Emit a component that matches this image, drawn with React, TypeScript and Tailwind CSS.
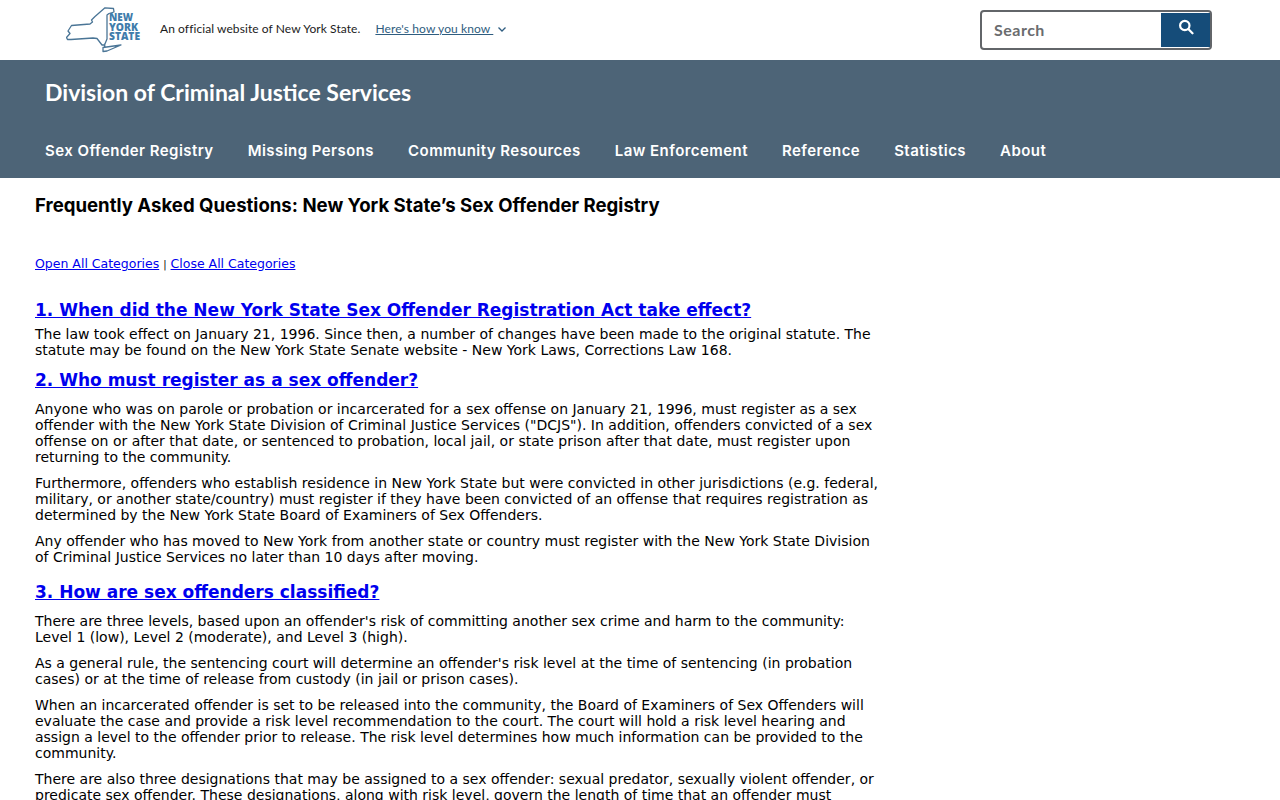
import React from "react";

function Logo() {
  return (
    <svg width="76" height="46" viewBox="0 0 76 46" className="shrink-0">
      <path
        d="M0.500 30.500 L4 26.500 L2 24 L5.500 18.500 L24 17 L26.500 15 L25.500 13 L29 9.500 L39 0.800 L47.500 1.500 L48 5 L43 6.500 L41 8 L41 32 L38.500 38 L36 38 L31 31.500 L27 31 L5 32.500 L1.500 32.500 Z M37 40.500 L55 38 L41 44 L37 44.500 Z M39 36 L38.500 40.500"
        fill="none"
        stroke="#4a7596"
        strokeWidth="1.300"
        strokeLinejoin="round"
      />
      <g fill="#3f7cab" fontFamily="'Open Sans', sans-serif" fontWeight="800" fontSize="10.500">
        <text x="43" y="14" textLength="24" lengthAdjust="spacingAndGlyphs">NEW</text>
        <text x="43" y="23.500" textLength="29" lengthAdjust="spacingAndGlyphs">YORK</text>
        <text x="43" y="33" textLength="31" lengthAdjust="spacingAndGlyphs">STATE</text>
      </g>
    </svg>
  );
}

const nav = ["Sex Offender Registry", "Missing Persons", "Community Resources", "Law Enforcement", "Reference", "Statistics", "About"];

export default function App() {
  return (
    <div className="h-[800px] overflow-hidden bg-white font-['DejaVu_Sans',sans-serif] text-[14px] leading-4 text-black">
      <header className="flex h-[60px] items-center justify-between pl-[66px] pr-[68px]">
        <div className="flex items-center">
          <Logo />
          <span className="mb-0.5 ml-[18px] font-['Lato',sans-serif] text-[12px] tracking-[0.08px] text-[#1b1b1b]">An official website of New York State.</span>
          <a className="mb-0.5 ml-[15px] font-['Lato',sans-serif] text-[12px] tracking-[0.1px] text-[#2f5d80] underline">Here's how you know&nbsp;</a>
          <svg width="10" height="10" viewBox="0 0 10 10" className="mb-0.5 ml-1" fill="none" stroke="#2f5d80" strokeWidth="1.300">
            <path d="M1.500 3.500 L5 7 L8.500 3.500" />
          </svg>
        </div>
        <div className="flex h-10 w-[232px] rounded-[4px] border-2 border-[#626569]">
          <span className="flex-1 self-center pl-3 font-['Lato',sans-serif] text-[16px] font-bold tracking-[0.5px] text-[#6a6c6f]">Search</span>
          <div className="mt-px flex h-[34px] w-[49px] justify-center bg-[#154c79] pt-[6px]">
            <svg width="16" height="16" viewBox="0 0 16 16" fill="none" stroke="white" strokeWidth="2.200">
              <circle cx="6.800" cy="6.500" r="4.700" />
              <path d="M10.300 10 L14.500 14.300" strokeLinecap="round" />
            </svg>
          </div>
        </div>
      </header>

      <div className="h-[118px] bg-[#4d6477] pl-[45px] text-white">
        <div className="pt-[18px] font-['Lato',sans-serif] text-[23px] font-bold leading-7">Division of Criminal Justice Services</div>
        <nav className="mt-[35px] flex gap-[34px] font-['Inter',sans-serif] text-[15px] font-semibold leading-5 tracking-[0.45px]">
          {nav.map((n) => (
            <a key={n}>{n}</a>
          ))}
        </nav>
      </div>

      <main className="w-[885px] pl-[35px]">
        <h1 className="mt-[15px] font-['Inter',sans-serif] text-[18.600px] font-bold leading-6">Frequently Asked Questions: New York State’s Sex Offender Registry</h1>
        <p className="mt-[39px] text-[12.500px] text-[#0000ee]">
          <a className="underline">Open All Categories</a> <span className="text-[10px] text-black">|</span> <a className="underline">Close All Categories</a>
        </p>

        <h2 className="mt-[26px] text-[17px] font-bold leading-[22px] text-[#0000ee] underline">1. When did the New York State Sex Offender Registration Act take effect?</h2>
        <p className="mt-[5px]">The law took effect on January 21, 1996. Since then, a number of changes have been made to the original statute. The statute may be found on the New York State Senate website - New York Laws, Corrections Law 168.</p>

        <h2 className="mt-[11px] text-[17px] font-bold leading-[22px] text-[#0000ee] underline">2. Who must register as a sex offender?</h2>
        <p className="mt-[10px]">Anyone who was on parole or probation or incarcerated for a sex offense on January 21, 1996, must register as a sex offender with the New York State Division of Criminal Justice Services ("DCJS"). In addition, offenders convicted of a sex offense on or after that date, or sentenced to probation, local jail, or state prison after that date, must register upon returning to the community.</p>
        <p className="mt-[10px]">Furthermore, offenders who establish residence in New York State but were convicted in other jurisdictions (e.g. federal, military, or another state/country) must register if they have been convicted of an offense that requires registration as determined by the New York State Board of Examiners of Sex Offenders.</p>
        <p className="mt-[10px]">Any offender who has moved to New York from another state or country must register with the New York State Division of Criminal Justice Services no later than 10 days after moving.</p>

        <h2 className="mt-[16px] text-[17px] font-bold leading-[22px] text-[#0000ee] underline">3. How are sex offenders classified?</h2>
        <p className="mt-[10px]">There are three levels, based upon an offender's risk of committing another sex crime and harm to the community: Level 1 (low), Level 2 (moderate), and Level 3 (high).</p>
        <p className="mt-[10px]">As a general rule, the sentencing court will determine an offender's risk level at the time of sentencing (in probation cases) or at the time of release from custody (in jail or prison cases).</p>
        <p className="mt-[10px]">When an incarcerated offender is set to be released into the community, the Board of Examiners of Sex Offenders will evaluate the case and provide a risk level recommendation to the court. The court will hold a risk level hearing and assign a level to the offender prior to release. The risk level determines how much information can be provided to the community.</p>
        <p className="mt-[10px]">There are also three designations that may be assigned to a sex offender: sexual predator, sexually violent offender, or predicate sex offender. These designations, along with risk level, govern the length of time that an offender must</p>
      </main>
    </div>
  );
}
